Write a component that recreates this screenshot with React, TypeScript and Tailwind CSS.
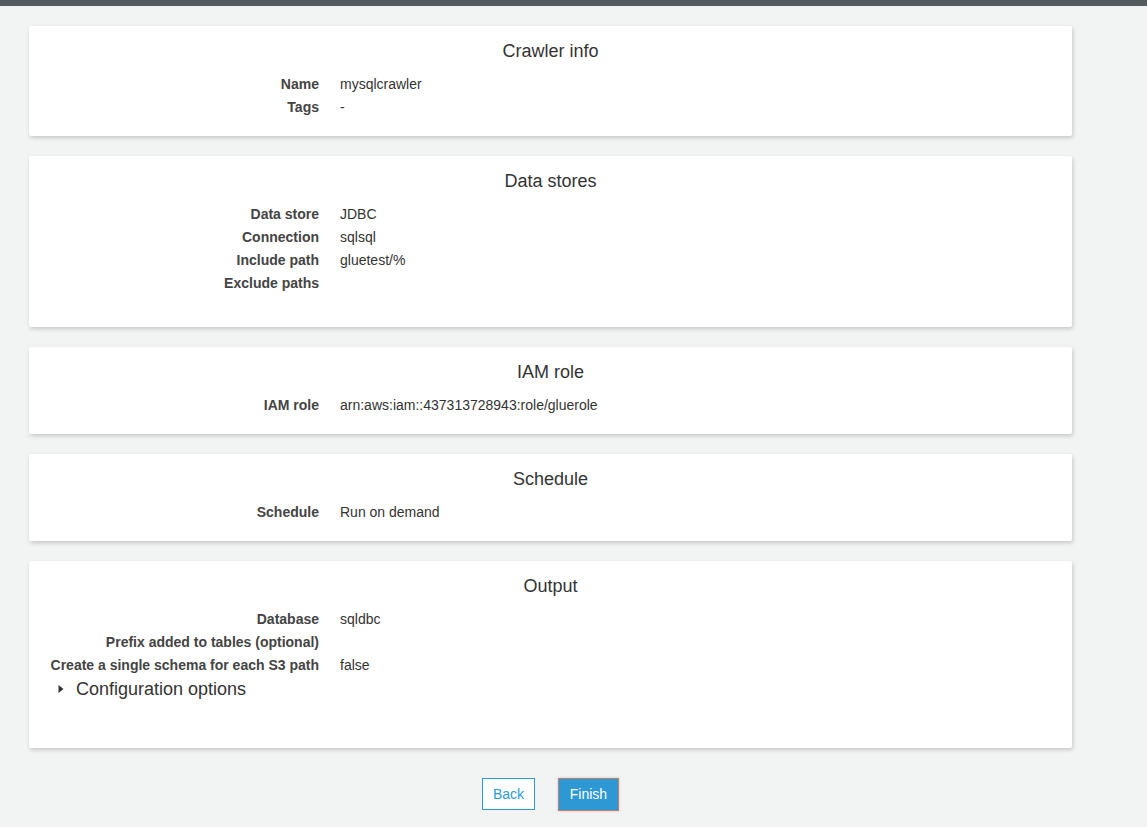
import React from "react";

type Row = { label: string; value?: string };

function Card({
  title,
  rows,
  pb = "pb-[17px]",
  children,
}: {
  title: string;
  rows: Row[];
  pb?: string;
  children?: React.ReactNode;
}) {
  return (
    <section className={`bg-white rounded-[2px] shadow-[1px_2px_4px_rgba(0,0,0,0.18)] pt-[15px] ${pb}`}>
      <h2 className="text-center text-[18px] leading-5 text-[#333] mb-[12px]">{title}</h2>
      <div className="grid grid-cols-[290px_1fr] gap-x-[21px]">
        {rows.map((r) => (
          <React.Fragment key={r.label}>
            <div className="text-right font-bold text-[14px] leading-[23px] text-[#444]">{r.label}</div>
            <div className="text-[14px] leading-[23px] text-[#333]">{r.value ?? ""}</div>
          </React.Fragment>
        ))}
      </div>
      {children}
    </section>
  );
}

export default function App() {
  return (
    <div className="min-h-[827px] bg-[#f2f4f3] font-['Liberation_Sans',Arial,sans-serif]">
      <div className="h-[6px] bg-[#545b5e]" />
      <div className="ml-[29px] w-[1043px] pt-[20px] flex flex-col gap-[20px]">
        <Card
          title="Crawler info"
          rows={[
            { label: "Name", value: "mysqlcrawler" },
            { label: "Tags", value: "-" },
          ]}
        />
        <Card
          title="Data stores"
          pb="pb-[32px]"
          rows={[
            { label: "Data store", value: "JDBC" },
            { label: "Connection", value: "sqlsql" },
            { label: "Include path", value: "gluetest/%" },
            { label: "Exclude paths" },
          ]}
        />
        <Card
          title="IAM role"
          rows={[{ label: "IAM role", value: "arn:aws:iam::437313728943:role/gluerole" }]}
        />
        <Card title="Schedule" rows={[{ label: "Schedule", value: "Run on demand" }]} />
        <Card
          title="Output"
          pb="pb-[47px]"
          rows={[
            { label: "Database", value: "sqldbc" },
            { label: "Prefix added to tables (optional)" },
            { label: "Create a single schema for each S3 path", value: "false" },
          ]}
        >
          <div className="flex items-center h-6 pl-[29px] text-[#333]">
            <svg width="6" height="10" viewBox="0 0 6 10" className="mr-[12px]">
              <path d="M0.5 1 L5.5 5 L0.5 9 Z" fill="#333" />
            </svg>
            <span className="text-[18px] leading-6">Configuration options</span>
          </div>
        </Card>
      </div>
      <div className="flex justify-center gap-[23px] pt-[30px] ml-[29px] w-[1043px]">
        <button className="h-[32px] w-[53px] bg-white border border-[#2a9bd6] text-[#2a9bd6] text-[14px]">
          Back
        </button>
        <button className="h-[33px] w-[61px] bg-[#2d98d4] border border-[#b98472] text-white text-[14px] shadow-[0_0_2px_rgba(210,130,100,0.6)]">
          Finish
        </button>
      </div>
    </div>
  );
}
